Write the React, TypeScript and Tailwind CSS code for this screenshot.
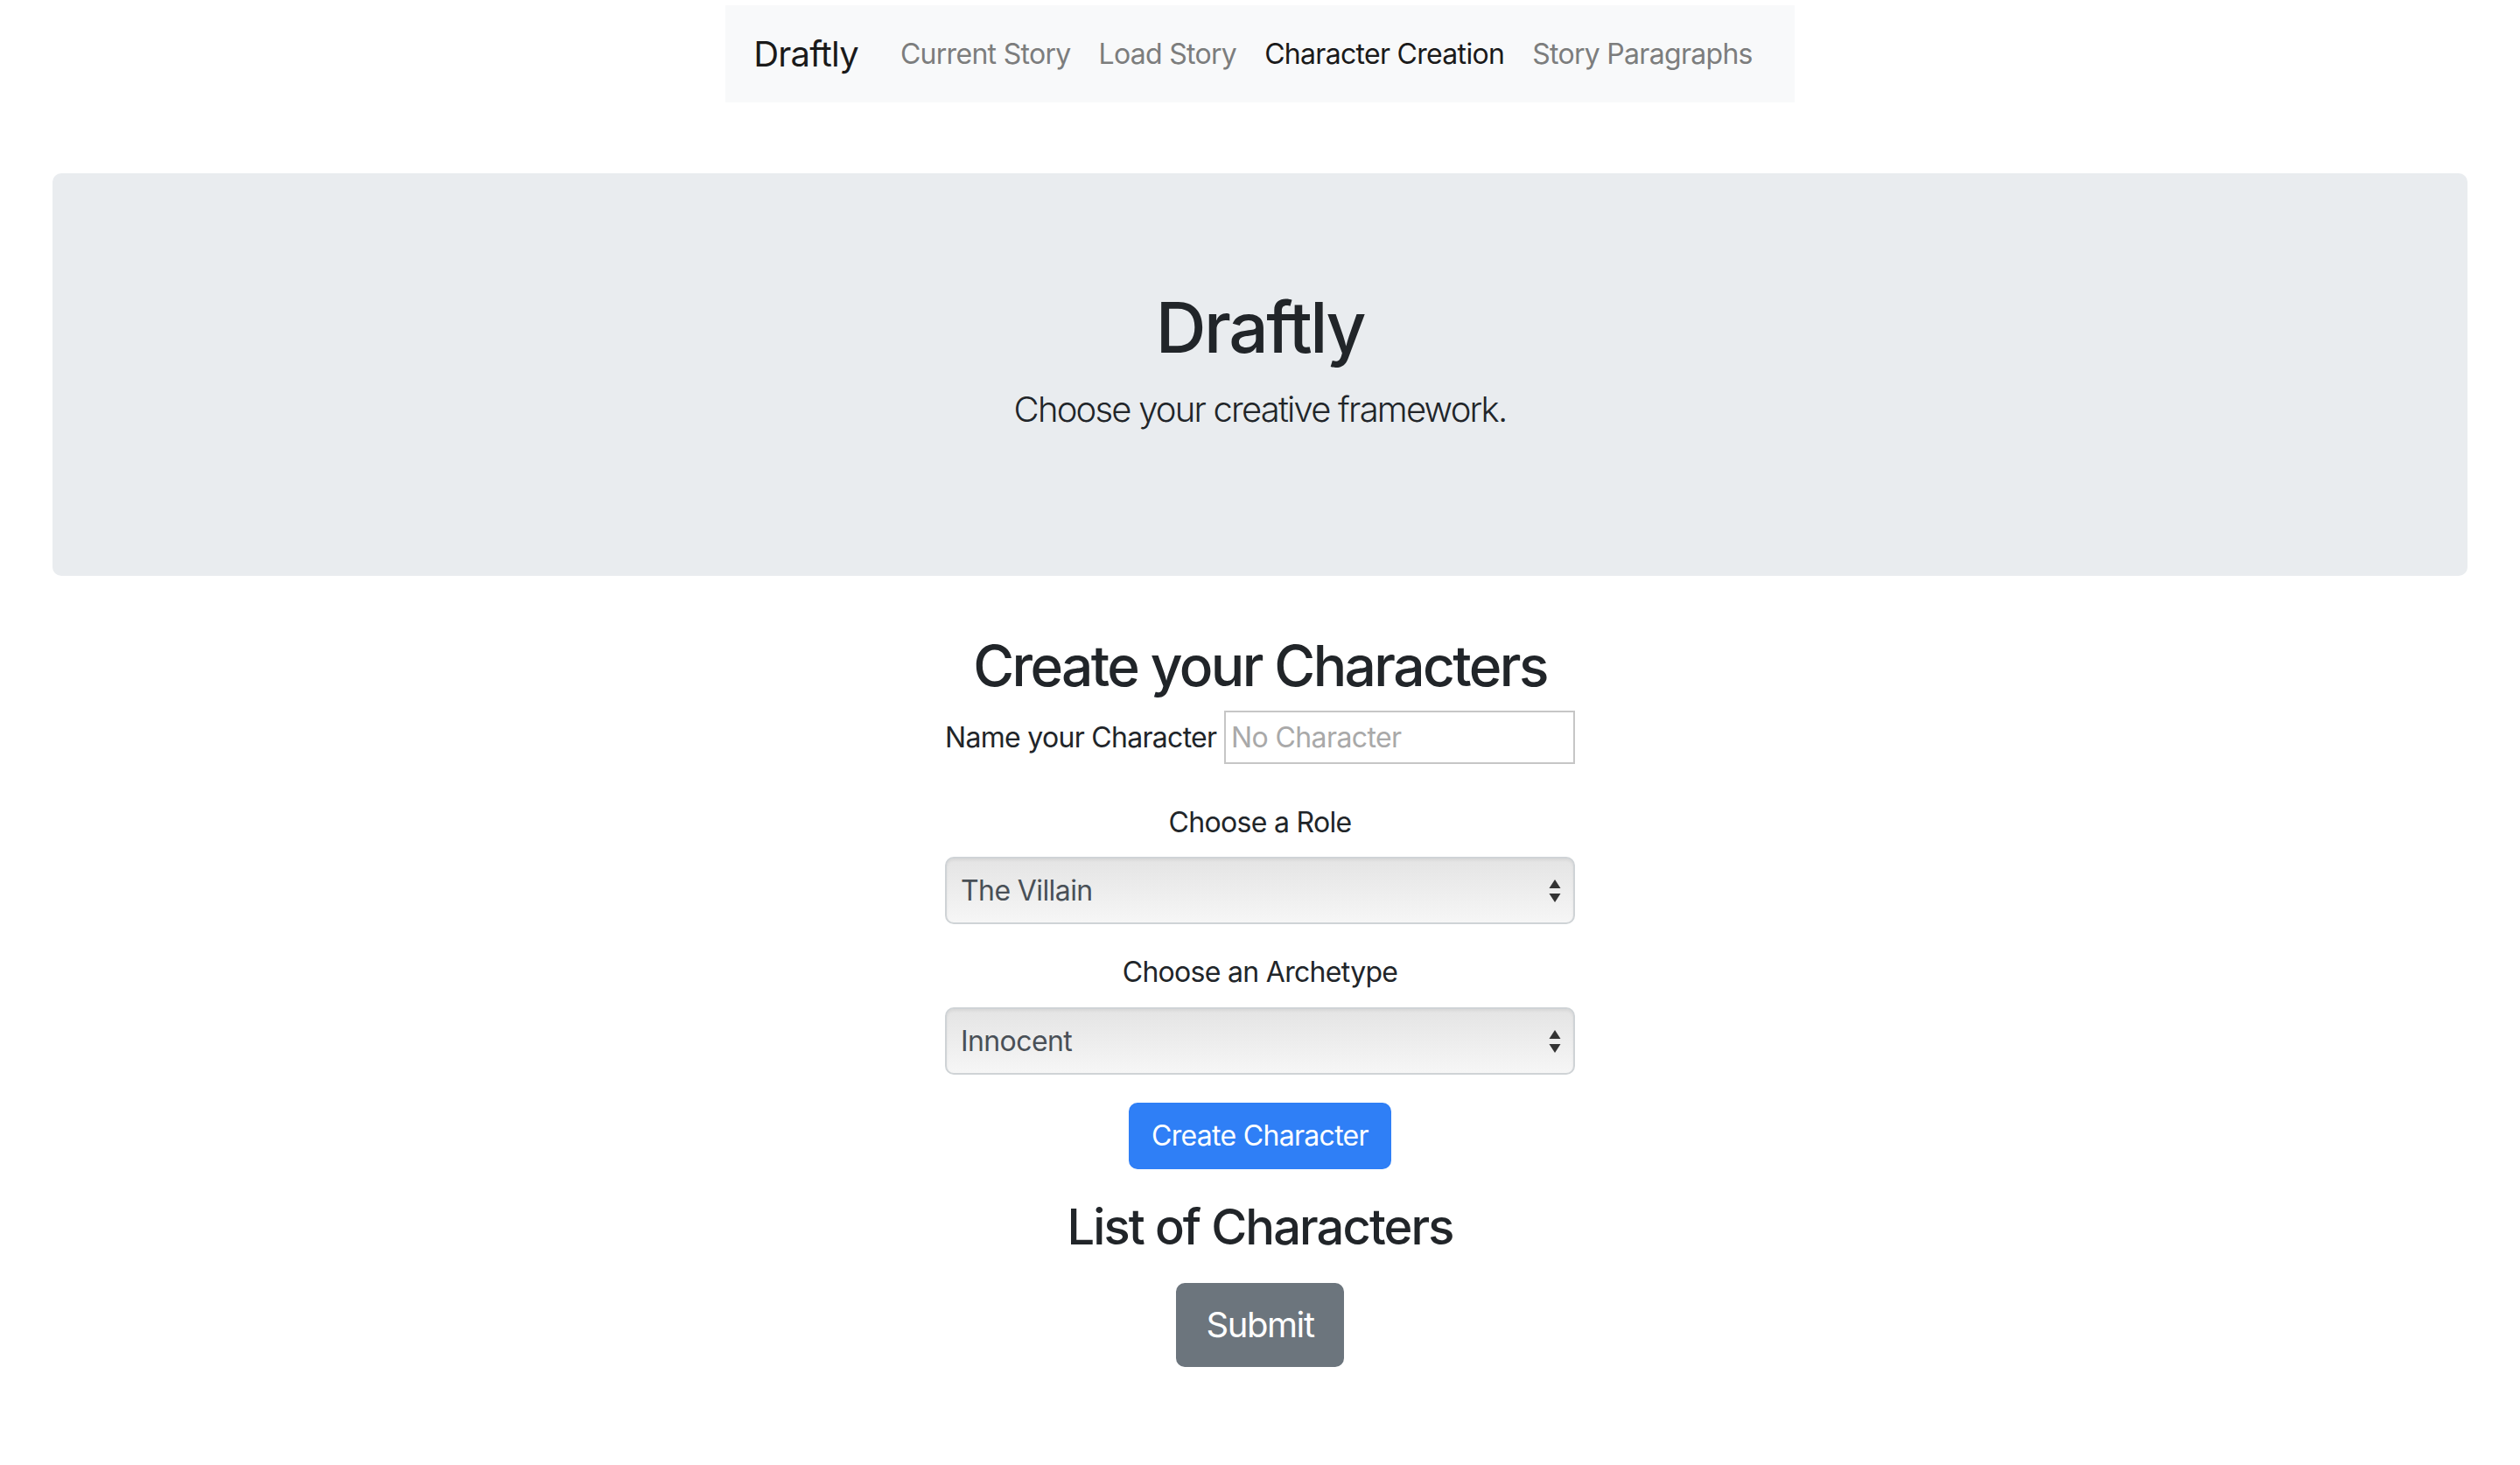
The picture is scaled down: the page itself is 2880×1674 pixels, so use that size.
import React from "react";

const links = [
  { label: "Current Story", active: false },
  { label: "Load Story", active: false },
  { label: "Character Creation", active: true },
  { label: "Story Paragraphs", active: false },
];

function Arrows() {
  return (
    <svg width="14" height="30" viewBox="0 0 14 30" className="shrink-0">
      <path d="M7 2 L13.5 12 L0.5 12 Z" fill="#333333" />
      <path d="M0.5 18 L13.5 18 L7 28 Z" fill="#333333" />
    </svg>
  );
}

function FakeSelect({ value }: { value: string }) {
  return (
    <div className="flex h-[77px] w-[720px] items-center justify-between rounded-[10px] border-2 border-[#cfd3d6] bg-linear-to-b from-[#e4e4e4] to-[#f6f6f6] pl-[16px] pr-[14px] text-[32px] tracking-[-0.6px] text-[#495057] shadow-[inset_0_2px_3px_rgba(0,0,0,0.06)]">
      <span>{value}</span>
      <Arrows />
    </div>
  );
}

export default function App() {
  return (
    <div className="min-h-[1674px] bg-white font-['Inter',sans-serif] text-[#212529]">
      <div className="flex justify-center pt-[6px]">
        <nav className="flex h-[111px] items-center bg-[#f8f9fa] px-[32px]">
          <span className="mr-[32px] text-[40px] leading-[60px] tracking-[-0.8px] text-[#1a1a1a]">Draftly</span>
          <div className="flex">
            {links.map((l) => (
              <span
                key={l.label}
                className={
                  "px-[16px] text-[32px] leading-[48px] tracking-[-0.7px] " +
                  (l.active ? "text-[#1a1a1a]" : "text-[#7c7d7d]")
                }
              >
                {l.label}
              </span>
            ))}
          </div>
        </nav>
      </div>

      <div className="mx-[60px] mt-[81px] flex h-[460px] flex-col items-center rounded-[10px] bg-[#e9ecef] pt-[128px]">
        <h1 className="text-[80px] font-medium leading-[96px] tracking-[-2.4px]">Draftly</h1>
        <p className="mt-[16px] text-[40px] font-light leading-[60px] tracking-[-1.8px]">Choose your creative framework.</p>
      </div>

      <div className="mt-[64px] flex flex-col items-center">
        <h2 className="text-[64px] font-medium leading-[77px] tracking-[-2.6px]">Create your Characters</h2>
        <div className="mt-[13px] flex h-[61px] w-[720px] items-center justify-between">
          <span className="whitespace-nowrap text-[32px] leading-[48px] tracking-[-0.7px]">Name your Character</span>
          <div className="flex h-[61px] w-[401px] items-center border-2 border-[#c6c6c6] bg-white pl-[6px] text-[32px] tracking-[-0.6px] text-[#a9a9a9]">
            No Character
          </div>
        </div>

        <span className="mt-[43px] text-[32px] leading-[48px] tracking-[-0.7px]">Choose a Role</span>
        <div className="mt-[15px]">
          <FakeSelect value="The Villain" />
        </div>

        <span className="mt-[31px] text-[32px] leading-[48px] tracking-[-0.7px]">Choose an Archetype</span>
        <div className="mt-[16px]">
          <FakeSelect value="Innocent" />
        </div>

        <button className="mt-[32px] h-[76px] rounded-[10px] border-2 border-[#2f7ff6] bg-[#2f7ff6] px-[24px] text-[32px] leading-[48px] tracking-[-0.7px] text-white">
          Create Character
        </button>

        <h3 className="mt-[33px] text-[56px] font-medium leading-[67px] tracking-[-1.9px]">List of Characters</h3>

        <button className="mt-[30px] h-[96px] rounded-[10px] border-2 border-[#6c757d] bg-[#6c757d] px-[32px] text-[40px] leading-[60px] tracking-[-1.4px] text-white">
          Submit
        </button>
      </div>
    </div>
  );
}
